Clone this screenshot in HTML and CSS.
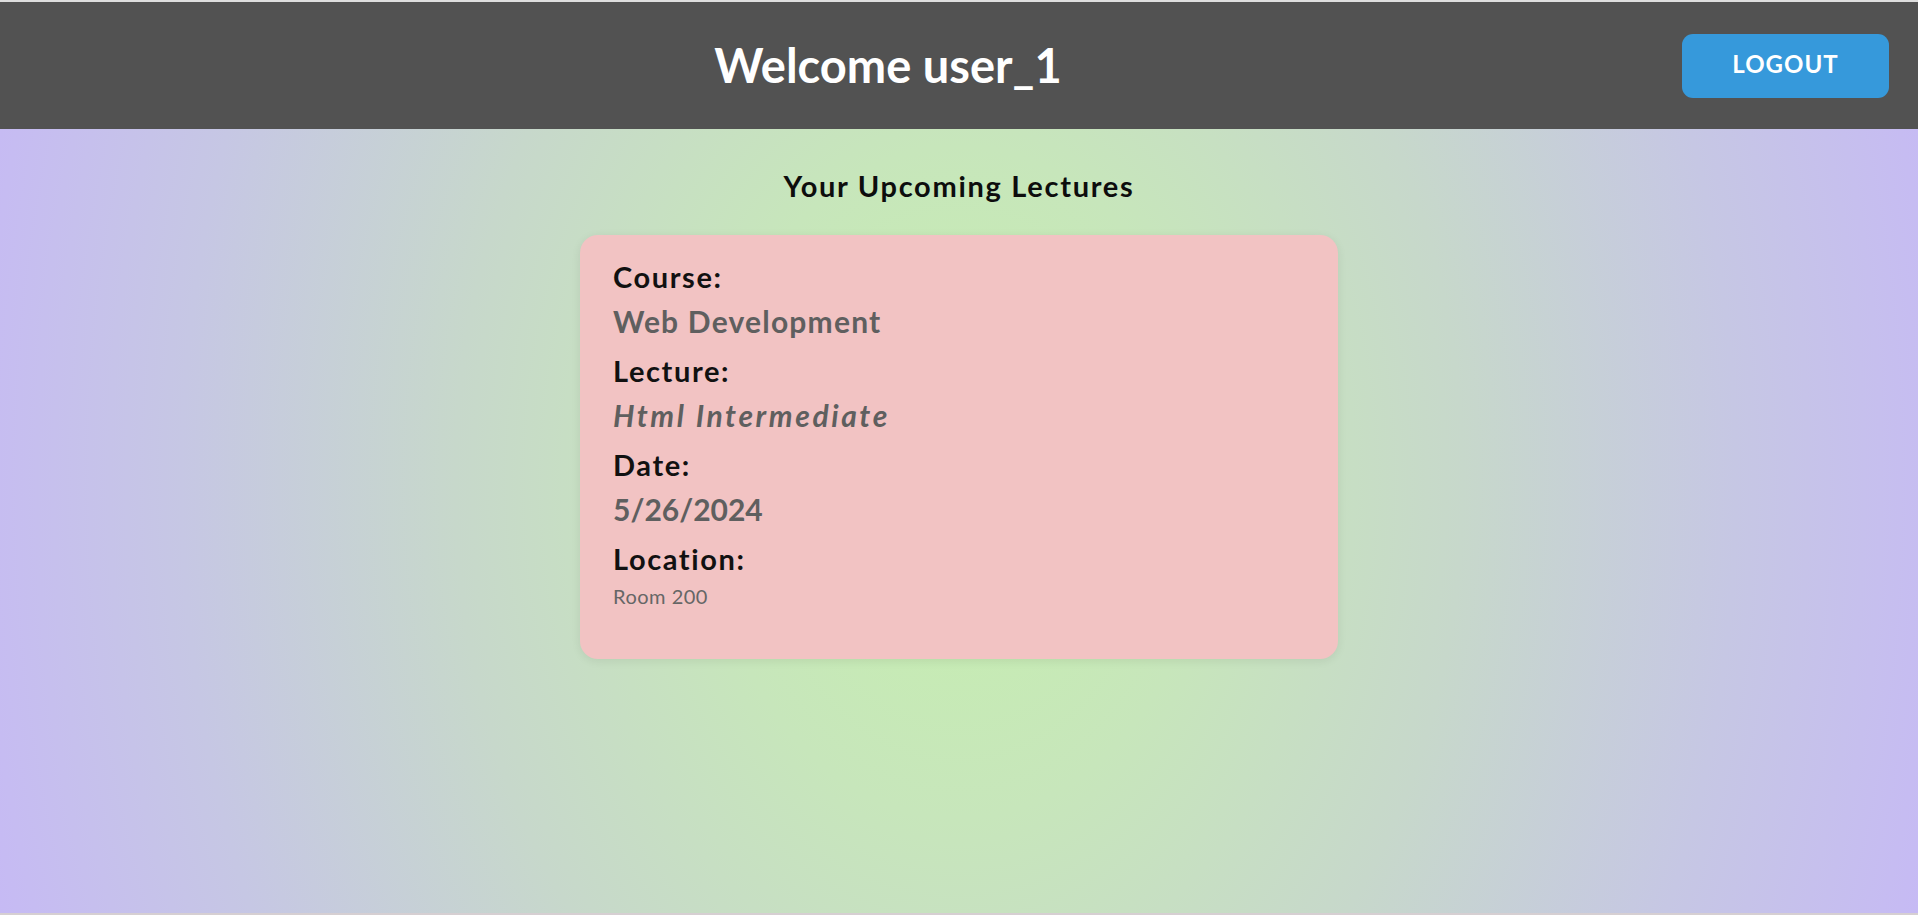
FILE: index.html
```html
<!DOCTYPE html>
<html lang="en">
<head>
<meta charset="utf-8">
<title>Lectures</title>
<link rel="stylesheet" href="styles.css">
</head>
<body>
<div class="page">
  <header class="topbar">
    <h1 class="welcome">Welcome user_1</h1>
    <button class="logout">LOGOUT</button>
  </header>
  <main class="content">
    <h2 class="section-title">Your Upcoming Lectures</h2>
    <div class="card">
      <div class="label">Course:</div>
      <div class="value">Web Development</div>
      <div class="label">Lecture:</div>
      <div class="value italic">Html Intermediate</div>
      <div class="label">Date:</div>
      <div class="value digits">5/26/2024</div>
      <div class="label">Location:</div>
      <div class="small">Room 200</div>
    </div>
  </main>
</div>
</body>
</html>
```
FILE: styles.css
```css
* { box-sizing: border-box; }
html, body { margin: 0; padding: 0; }
body {
  font-family: "Lato", "Liberation Sans", sans-serif;
  background: #ffffff;
}
.page {
  height: 915px;
  display: flex;
  flex-direction: column;
  border-top: 2px solid #dedede;
  border-bottom: 2px solid #d6cfd2;
  background: radial-gradient(ellipse 1050px 1400px at 50% 480px,
    #c6f0ae 0%, #c7e6bb 24%, #c7d8cb 48%, #c6c7e4 74%, #c6b8f7 100%);
  overflow: hidden;
}
.topbar {
  height: 127px;
  flex: none;
  background: #525252;
  display: flex;
  align-items: center;
  padding-right: 29px;
}
.welcome {
  flex: 1;
  margin: 0;
  padding-left: 94px;
  text-align: center;
  color: #ffffff;
  font-size: 47px;
  font-weight: 700;
  line-height: 1;
}
.logout {
  width: 207px;
  height: 64px;
  border: none;
  border-radius: 11px;
  background: #3699db;
  color: #ffffff;
  font-family: "Lato", "Liberation Sans", sans-serif;
  font-weight: 700;
  font-size: 24px;
  letter-spacing: 1px;
  padding: 0 0 6px 0;
  margin-top: 1px;
}
.content {
  flex: 1;
  display: flex;
  flex-direction: column;
  align-items: center;
  padding-top: 37px;
}
.section-title {
  margin: 0 0 29px 0;
  font-size: 29px;
  line-height: 40px;
  font-weight: 700;
  color: #0d0d0d;
  letter-spacing: 1.7px;
}
.card {
  width: 758px;
  background: #f2c3c3;
  border-radius: 18px;
  box-shadow: 0 2px 10px rgba(0, 0, 0, 0.08);
  padding: 20px 32px 47px 33px;
}
.label {
  font-size: 29px;
  line-height: 44px;
  font-weight: 700;
  color: #111111;
  letter-spacing: 1.6px;
}
.value {
  font-size: 30px;
  line-height: 44px;
  font-weight: 700;
  color: #5f5f5f;
  letter-spacing: 1.2px;
  margin-bottom: 6px;
}
.value.italic {
  font-style: italic;
  letter-spacing: 2.6px;
}
.value.digits {
  letter-spacing: 0;
}
.small {
  font-size: 20px;
  line-height: 31px;
  color: #666666;
  letter-spacing: 0.5px;
}
```
